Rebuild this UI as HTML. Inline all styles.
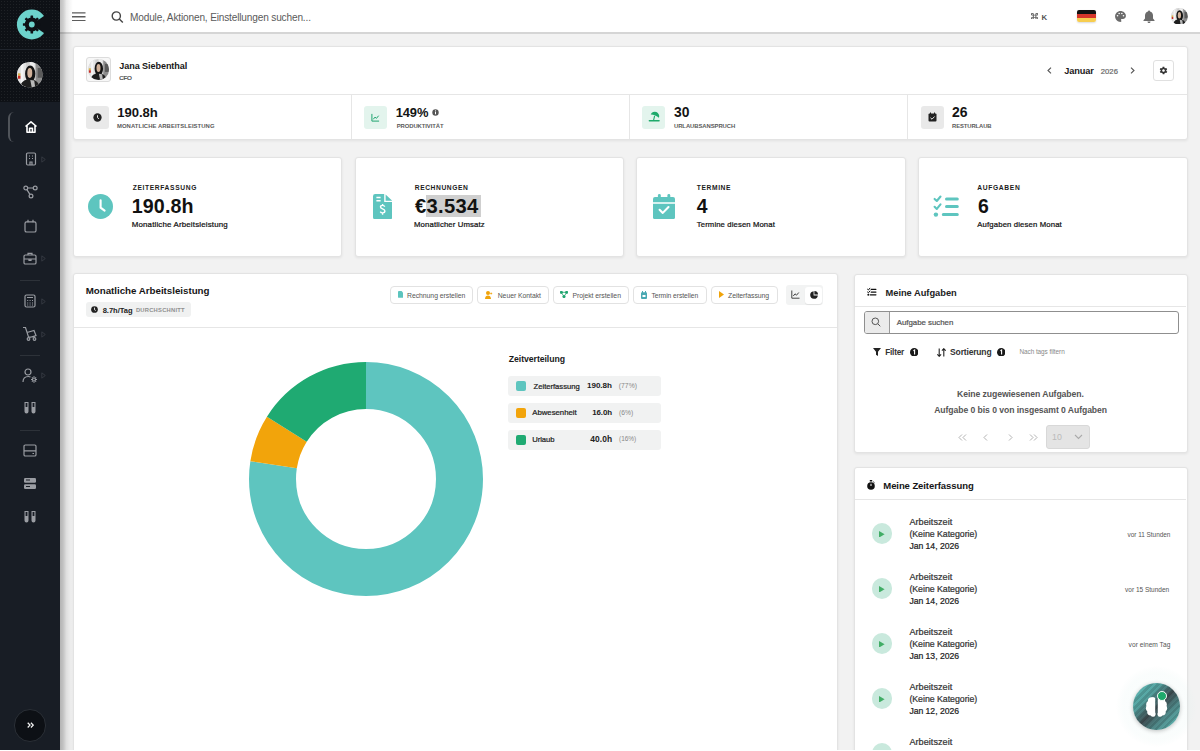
<!DOCTYPE html>
<html><head><meta charset="utf-8">
<style>
*{box-sizing:border-box;margin:0;padding:0}
html,body{width:1200px;height:751px;overflow:hidden;background:#f2f2f2;font-family:"Liberation Sans",sans-serif;color:#111}
.a{position:absolute}
.t{position:absolute;white-space:nowrap;line-height:1}
#side{left:0;top:0;width:60px;height:750px;background:#181d25}
#sidetop{left:0;top:0;width:60px;height:102px;background-color:#0e1116;background-image:radial-gradient(rgba(255,255,255,.07) 0.5px,transparent 0.7px);background-size:3px 3px}
#hdr{left:60px;top:0;width:1140px;height:34px;background:#fff;border-bottom:2px solid #d5d5d5}
#shadow{left:60px;top:0;width:13px;height:750px;background:linear-gradient(to right,rgba(0,0,0,.26) 0,rgba(0,0,0,.2) 3px,rgba(0,0,0,.08) 6.5px,rgba(0,0,0,.03) 10px,rgba(0,0,0,0) 13px);z-index:5}
.card{position:absolute;background:#fff;border:1px solid #e3e3e3;border-radius:3px;box-shadow:0 1px 3px rgba(0,0,0,.07)}
.sep{position:absolute;background:#e6e6e6}
.ib{position:absolute;width:23px;height:23px;border-radius:3px;background:#e9e9e9}
.ibg{background:#e3f4ed}
.sv{font-weight:bold;font-size:13.5px;color:#151515}
.sl{font-weight:bold;font-size:6px;letter-spacing:.45px;color:#555}
.kl{font-weight:bold;font-size:7px;letter-spacing:1.25px;color:#1b1b1b}
.kv{font-weight:bold;font-size:19.5px;color:#111}
.ks{font-size:8px;color:#222}
.btn{position:absolute;top:286px;height:18px;border:1px solid #e2e2e2;border-radius:4px;background:#fff}
.bt{position:absolute;top:5px;font-size:7.3px;color:#555;white-space:nowrap;line-height:1}
.lg{position:absolute;left:508px;width:153px;height:20px;background:#f1f2f2;border-radius:3px}
.sw{position:absolute;left:8px;top:5px;width:10px;height:10px;border-radius:2px}
.ln{position:absolute;left:25px;top:6px;font-size:7.8px;color:#333;line-height:1;white-space:nowrap}
.lv{position:absolute;right:48px;top:5.5px;font-size:8.5px;font-weight:bold;color:#222;line-height:1;white-space:nowrap}
.lp{position:absolute;left:111px;top:6px;font-size:6.5px;color:#777;line-height:1;white-space:nowrap}
.si{position:absolute;left:22px}
.zr{position:absolute;left:855px;width:332px;height:55px}
.play{position:absolute;left:16px;top:12px;width:21px;height:21px;border-radius:50%;background:#c9ebdf}
.zt{position:absolute;left:54px;font-size:8.8px;color:#444;line-height:1;white-space:nowrap}
.zd{position:absolute;right:16px;top:18.5px;font-size:6.3px;color:#555;line-height:1;white-space:nowrap}
</style></head><body>

<!-- sidebar -->
<div id="side" class="a"></div>
<div id="sidetop" class="a"></div>
<div class="a" style="left:0;top:49px;width:60px;height:1px;background:#20252d"></div>

<!-- logo -->
<svg class="a" style="left:14px;top:8px" width="36" height="34" viewBox="0 0 36 34">
  <circle cx="17.8" cy="16.5" r="14.9" fill="#6dd3cc"/>
  <path d="M17.8 16.5L36 3.8V29.2Z" fill="#0e1116"/>
  <g transform="translate(17.8,16.5)" fill="#0e1116">
    <circle r="7"/>
    <rect x="-1.3" y="-8.9" width="2.6" height="17.8" rx=".5"/>
    <rect x="-1.3" y="-8.9" width="2.6" height="17.8" rx=".5" transform="rotate(45)"/>
    <rect x="-1.3" y="-8.9" width="2.6" height="17.8" rx=".5" transform="rotate(90)"/>
    <rect x="-1.3" y="-8.9" width="2.6" height="17.8" rx=".5" transform="rotate(135)"/>
    <circle r="2.9" fill="#6dd3cc"/>
  </g>
</svg>

<!-- sidebar avatar -->
<svg width="0" height="0" style="position:absolute"><defs><clipPath id="pc"><circle cx="13" cy="13" r="13"/></clipPath></defs></svg>
<svg class="a" style="left:17.2px;top:62.2px" width="25.6" height="25.6" viewBox="0 0 26 26"><g clip-path="url(#pc)">
 <rect width="26" height="26" fill="#cfcfcf"/>
 <rect x="0" y="0" width="9" height="26" fill="#e2e2e2"/>
 <rect x="4" y="0" width="2.5" height="26" fill="#f4f4f4"/>
 <rect x="13" y="0" width="5" height="10" fill="#ededed"/>
 <rect x="19" y="0" width="7" height="26" fill="#8c8c8c"/>
 <rect x="21" y="6" width="5" height="10" fill="#5a5a5a"/>
 <rect x="1" y="11.5" width="2.5" height="2.5" fill="#d9b24a"/>
 <rect x="1" y="14" width="2.5" height="3" fill="#c92a22"/>
 <ellipse cx="13.4" cy="12" rx="5.2" ry="8.5" fill="#141414"/>
 <ellipse cx="13" cy="11.2" rx="2.5" ry="5" fill="#d2b29a"/>
 <path d="M3 26C4 20 8 17.5 13 17.5S22 20 23 26Z" fill="#1e1e1e"/>
 <path d="M13.5 18.3L17.5 18.8L18.5 26H15Z" fill="#b9b9b9"/>
</g></svg>

<!-- active indicator -->
<div class="a" style="left:8px;top:112px;width:6px;height:30px;border-left:2.3px solid #50545a;border-radius:6px 0 0 6px"></div>

<!-- sidebar icons -->
<svg class="a" style="left:24px;top:120px" width="14" height="14" viewBox="0 0 14 14" fill="none" stroke="#fff" stroke-width="1.6" stroke-linejoin="round"><path d="M1.5 6.5 L7 1.8 L12.5 6.5 M3 5.5 V12.3 H11 V5.5 M5.6 12.3 V8.3 H8.4 V12.3"/></svg>

<svg class="a" style="left:24px;top:152px" width="14" height="14" viewBox="0 0 14 14" fill="none" stroke="#9a9da3" stroke-width="1.2"><rect x="2.5" y="1" width="9" height="12" rx="1.2"/><path d="M5 4h1M8 4h1M5 6.5h1M8 6.5h1M6 13v-3h2v3"/></svg>
<svg class="a" style="left:41px;top:156px" width="5" height="7" viewBox="0 0 5 7" fill="none" stroke="#3b4047" stroke-width=".8"><path d="M0.8 0.8 L4.3 3.5 L0.8 6.2Z"/></svg>

<svg class="a" style="left:23px;top:185px" width="15" height="14" viewBox="0 0 15 14" fill="none" stroke="#9a9da3" stroke-width="1.2"><circle cx="2.8" cy="3" r="1.9"/><circle cx="12.2" cy="3" r="1.9"/><circle cx="8" cy="11" r="1.9"/><path d="M4.7 3H10.3M3.9 4.6L6.9 9.4"/></svg>

<svg class="a" style="left:24px;top:219px" width="13" height="14" viewBox="0 0 13 14" fill="none" stroke="#9a9da3" stroke-width="1.2"><rect x="1" y="2.8" width="11" height="10.2" rx="1.6"/><path d="M4 0.8V3.2M9 0.8V3.2"/></svg>

<svg class="a" style="left:23px;top:252px" width="14" height="13" viewBox="0 0 14 13" fill="none" stroke="#9a9da3" stroke-width="1.2"><rect x="1" y="3" width="12" height="9" rx="1.3"/><path d="M5 3V1.3H9V3M1 7H13M6 7v1.3h2V7"/></svg>
<svg class="a" style="left:41px;top:255px" width="5" height="7" viewBox="0 0 5 7" fill="none" stroke="#3b4047" stroke-width=".8"><path d="M0.8 0.8 L4.3 3.5 L0.8 6.2Z"/></svg>

<div class="a" style="left:20px;top:280px;width:20px;height:1px;background:#2d3239"></div>

<svg class="a" style="left:24px;top:294px" width="12" height="14" viewBox="0 0 12 14" fill="none" stroke="#9a9da3" stroke-width="1.2"><rect x="1" y="1" width="10" height="12" rx="1.5"/><path d="M3 3.5H9M3.2 6.5h1M5.6 6.5h1M8 6.5h1M3.2 9h1M5.6 9h1M8 9h1M3.2 11h1M5.6 11h1M8 11h1"/></svg>
<svg class="a" style="left:41px;top:298px" width="5" height="7" viewBox="0 0 5 7" fill="none" stroke="#3b4047" stroke-width=".8"><path d="M0.8 0.8 L4.3 3.5 L0.8 6.2Z"/></svg>

<svg class="a" style="left:22px;top:326px" width="16" height="15" viewBox="0 0 16 15" fill="none" stroke="#9a9da3" stroke-width="1.2"><path d="M1 1.5H3.5L6.5 11H13M5 6.5L12 4.5L14 9.5L7.5 11.5"/><circle cx="6.5" cy="13" r="1.3"/><circle cx="12.5" cy="13" r="1.3"/></svg>
<svg class="a" style="left:41px;top:331px" width="5" height="7" viewBox="0 0 5 7" fill="none" stroke="#3b4047" stroke-width=".8"><path d="M0.8 0.8 L4.3 3.5 L0.8 6.2Z"/></svg>

<div class="a" style="left:20px;top:355px;width:20px;height:1px;background:#2d3239"></div>

<svg class="a" style="left:22px;top:368px" width="16" height="15" viewBox="0 0 16 15" fill="none" stroke="#9a9da3" stroke-width="1.2"><circle cx="6" cy="4" r="3"/><path d="M1 14C1 10.5 3.2 8.5 6.5 8.5C7.3 8.5 8 8.6 8.5 8.9"/><circle cx="12" cy="11.5" r="1.5"/><path d="M12 8.3V9.5M12 13.5V14.7M9 11.5H10M14 11.5H15M9.9 9.4l.7.7M13.4 12.9l.7.7M9.9 13.6l.7-.7M13.4 10.1l.7-.7"/></svg>
<svg class="a" style="left:41px;top:372px" width="5" height="7" viewBox="0 0 5 7" fill="none" stroke="#3b4047" stroke-width=".8"><path d="M0.8 0.8 L4.3 3.5 L0.8 6.2Z"/></svg>

<svg class="a" style="left:23px;top:401px" width="14" height="14" viewBox="0 0 14 14" fill="#9a9da3"><path d="M1.5 1H5.5V10.5A2 2 0 0 1 1.5 10.5Z M8.5 1H12.5V10.5A2 2 0 0 1 8.5 10.5Z"/><path d="M2.6 2V6H4.4V2ZM9.6 2V6H11.4V2Z" fill="#181d25"/></svg>

<div class="a" style="left:20px;top:430px;width:20px;height:1px;background:#2d3239"></div>

<svg class="a" style="left:23px;top:444px" width="14" height="13" viewBox="0 0 14 13" fill="none" stroke="#9a9da3" stroke-width="1.2"><rect x="1" y="1" width="12" height="11" rx="1.3"/><path d="M1 6.8H13M9.5 9.5h1.5"/></svg>

<svg class="a" style="left:23px;top:477px" width="14" height="13" viewBox="0 0 14 13" fill="#9a9da3"><rect x="1" y="1" width="12" height="4.8" rx="1.2"/><rect x="1" y="7.2" width="12" height="4.8" rx="1.2"/><path d="M3 3h4M3 9.5h4" stroke="#181d25" stroke-width="1.2"/></svg>

<svg class="a" style="left:23px;top:510px" width="14" height="14" viewBox="0 0 14 14" fill="#9a9da3"><path d="M1.5 1H5.5V10.5A2 2 0 0 1 1.5 10.5Z M8.5 1H12.5V10.5A2 2 0 0 1 8.5 10.5Z"/><path d="M2.6 2V6H4.4V2ZM9.6 2V6H11.4V2Z" fill="#181d25"/></svg>

<!-- expand button -->
<div class="a" style="left:13.8px;top:709px;width:32.5px;height:32.5px;border-radius:50%;background:#0d1015;border:1.3px solid #2a2f36"></div>
<svg class="a" style="left:26.6px;top:722.3px" width="7" height="6.2" viewBox="0 0 7 6.2" fill="none" stroke="#f2f2f2" stroke-width="1.25"><path d="M.7 .7L3 3.1L.7 5.5M3.9 .7L6.2 3.1L3.9 5.5"/></svg>

<div class="a" style="left:0;top:750px;width:1200px;height:1px;background:#fff;z-index:6"></div>
<!-- header -->
<div id="hdr" class="a"></div>
<div id="shadow" class="a"></div>
<svg class="a" style="left:72px;top:11.5px" width="13.5" height="9.5" viewBox="0 0 13.5 9.5" stroke="#5c5c5c" stroke-width="1.3"><path d="M0 .8H13.5M0 4.75H13.5M0 8.7H13.5"/></svg>
<svg class="a" style="left:110.5px;top:10.8px" width="13" height="12" viewBox="0 0 13 12" fill="none" stroke="#454545" stroke-width="1.4"><circle cx="5.3" cy="5" r="4.1"/><path d="M8.3 8L11.8 11.4"/></svg>
<svg class="a" style="left:1031px;top:12.7px" width="7.2" height="6.5" viewBox="0 0 8 8" preserveAspectRatio="none" fill="none" stroke="#666" stroke-width="1.15"><path d="M2.6 2.6H5.4V5.4H2.6ZM2.6 2.6V1.6A1.1 1.1 0 1 0 1.6 2.6H2.6M5.4 2.6V1.6A1.1 1.1 0 1 1 6.4 2.6H5.4M5.4 5.4H6.4A1.1 1.1 0 1 1 5.4 6.4V5.4M2.6 5.4V6.4A1.1 1.1 0 1 1 1.6 5.4H2.6"/></svg>
<div class="a" style="left:1077px;top:10px;width:19px;height:12px;border-radius:2px;overflow:hidden;box-shadow:0 1px 2px rgba(0,0,0,.15)">
 <div style="height:4px;background:#111"></div><div style="height:4px;background:#d5362b"></div><div style="height:4px;background:#f7cd4f"></div>
</div>
<svg class="a" style="left:1114px;top:10px" width="13" height="13" viewBox="0 0 24 24" fill="#6b6b6b"><path d="M12 2C6.5 2 2 6.5 2 12s4.5 10 10 10c.9 0 1.7-.8 1.7-1.7 0-.4-.2-.8-.4-1.1-.3-.3-.4-.7-.4-1.1 0-.9.8-1.7 1.7-1.7H16.5c3 0 5.5-2.5 5.5-5.5C22 6 17.5 2 12 2zM6.5 12a1.5 1.5 0 1 1 0-3 1.5 1.5 0 0 1 0 3zm3-4a1.5 1.5 0 1 1 0-3 1.5 1.5 0 0 1 0 3zm5 0a1.5 1.5 0 1 1 0-3 1.5 1.5 0 0 1 0 3zm3 4a1.5 1.5 0 1 1 0-3 1.5 1.5 0 0 1 0 3z"/></svg>
<svg class="a" style="left:1143px;top:10px" width="12" height="13" viewBox="0 0 12 13" fill="#6b6b6b"><path d="M6 0.5C6.6 0.5 7 .9 7 1.4 9 1.9 10 3.6 10 5.5V8.5L11.5 10.3V11H0.5V10.3L2 8.5V5.5C2 3.6 3 1.9 5 1.4 5 .9 5.4.5 6 .5zM4.5 11.6H7.5A1.5 1.5 0 0 1 4.5 11.6Z"/></svg>
<svg class="a" style="left:1171px;top:7.7px" width="16.8" height="16.8" viewBox="0 0 26 26"><g clip-path="url(#pc)">
 <rect width="26" height="26" fill="#cfcfcf"/>
 <rect x="0" y="0" width="9" height="26" fill="#e2e2e2"/>
 <rect x="4" y="0" width="2.5" height="26" fill="#f4f4f4"/>
 <rect x="13" y="0" width="5" height="10" fill="#ededed"/>
 <rect x="19" y="0" width="7" height="26" fill="#8c8c8c"/>
 <rect x="21" y="6" width="5" height="10" fill="#5a5a5a"/>
 <rect x="1" y="11.5" width="2.5" height="2.5" fill="#d9b24a"/>
 <rect x="1" y="14" width="2.5" height="3" fill="#c92a22"/>
 <ellipse cx="13.4" cy="12" rx="5.2" ry="8.5" fill="#141414"/>
 <ellipse cx="13" cy="11.2" rx="2.5" ry="5" fill="#d2b29a"/>
 <path d="M3 26C4 20 8 17.5 13 17.5S22 20 23 26Z" fill="#1e1e1e"/>
 <path d="M13.5 18.3L17.5 18.8L18.5 26H15Z" fill="#b9b9b9"/>
</g></svg>

<!-- profile card -->
<div class="card" style="left:73px;top:46px;width:1115px;height:94px"></div>
<div class="sep" style="left:74px;top:94px;width:1113px;height:1px"></div>
<div class="sep" style="left:351px;top:95px;width:1px;height:44px"></div>
<div class="sep" style="left:629px;top:95px;width:1px;height:44px"></div>
<div class="sep" style="left:907px;top:95px;width:1px;height:44px"></div>
<div class="a" style="left:86px;top:57px;width:25px;height:25px;border:1px solid #dcdcdc;border-radius:3px;background:#f7f7f7"></div>
<svg class="a" style="left:88px;top:59px" width="21" height="21" viewBox="0 0 26 26"><g clip-path="url(#pc)">
 <rect width="26" height="26" fill="#cfcfcf"/>
 <rect x="0" y="0" width="9" height="26" fill="#e2e2e2"/>
 <rect x="4" y="0" width="2.5" height="26" fill="#f4f4f4"/>
 <rect x="13" y="0" width="5" height="10" fill="#ededed"/>
 <rect x="19" y="0" width="7" height="26" fill="#8c8c8c"/>
 <rect x="21" y="6" width="5" height="10" fill="#5a5a5a"/>
 <rect x="1" y="11.5" width="2.5" height="2.5" fill="#d9b24a"/>
 <rect x="1" y="14" width="2.5" height="3" fill="#c92a22"/>
 <ellipse cx="13.4" cy="12" rx="5.2" ry="8.5" fill="#141414"/>
 <ellipse cx="13" cy="11.2" rx="2.5" ry="5" fill="#d2b29a"/>
 <path d="M3 26C4 20 8 17.5 13 17.5S22 20 23 26Z" fill="#1e1e1e"/>
 <path d="M13.5 18.3L17.5 18.8L18.5 26H15Z" fill="#b9b9b9"/>
</g></svg>

<svg class="a" style="left:1046.8px;top:67.3px" width="5" height="7" viewBox="0 0 5 7" fill="none" stroke="#555" stroke-width="1.1"><path d="M4 .7L1 3.5L4 6.3"/></svg>
<svg class="a" style="left:1130.3px;top:67.3px" width="5" height="7" viewBox="0 0 5 7" fill="none" stroke="#555" stroke-width="1.1"><path d="M1 .7L4 3.5L1 6.3"/></svg>
<div class="a" style="left:1153px;top:60px;width:21px;height:21px;border:1px solid #e0e0e0;border-radius:3px;background:#fff"></div>
<svg class="a" style="left:1159px;top:66px" width="9" height="9" viewBox="0 0 24 24" fill="#333"><path d="M19.4 13c.1-.3.1-.7.1-1s0-.7-.1-1l2.1-1.6c.2-.2.2-.4.1-.6l-2-3.5c-.1-.2-.4-.3-.6-.2l-2.5 1c-.5-.4-1.1-.7-1.7-1l-.4-2.6c0-.3-.2-.4-.5-.4h-4c-.3 0-.5.2-.5.4l-.4 2.7c-.6.2-1.1.6-1.7 1l-2.5-1c-.2-.1-.5 0-.6.2l-2 3.5c-.1.2 0 .5.1.6L4.6 11c0 .3-.1.7-.1 1s0 .7.1 1l-2.1 1.6c-.2.2-.2.4-.1.6l2 3.5c.1.2.4.3.6.2l2.5-1c.5.4 1.1.7 1.7 1l.4 2.7c0 .2.2.4.5.4h4c.3 0 .5-.2.5-.4l.4-2.7c.6-.2 1.2-.6 1.7-1l2.5 1c.2.1.5 0 .6-.2l2-3.5c.1-.2.1-.5-.1-.6L19.4 13zM12 15.5c-1.9 0-3.5-1.6-3.5-3.5s1.6-3.5 3.5-3.5 3.5 1.6 3.5 3.5-1.6 3.5-3.5 3.5z"/></svg>

<!-- stat cells -->
<div class="ib" style="left:86px;top:106px"></div>
<svg class="a" style="left:93px;top:113px" width="9" height="9" viewBox="0 0 10 10"><circle cx="5" cy="5" r="4.6" fill="#222"/><path d="M5 2.5V5.2L6.6 6.4" stroke="#e9e9e9" stroke-width="1.1" fill="none"/></svg>

<div class="ib ibg" style="left:364px;top:106px"></div>
<svg class="a" style="left:371px;top:113px" width="9" height="9" viewBox="0 0 10 10" fill="none" stroke="#1fa46f" stroke-width="1.1"><path d="M1 1V9H9M2.5 7L4.5 4.5L6 6L8.5 3"/></svg>
<svg class="a" style="left:432px;top:109px" width="7" height="7" viewBox="0 0 7 7"><circle cx="3.5" cy="3.5" r="3.2" fill="#555"/><path d="M3.5 3v2.3" stroke="#fff" stroke-width="1"/><circle cx="3.5" cy="1.9" r=".55" fill="#fff"/></svg>

<div class="ib ibg" style="left:642px;top:106px"></div>
<svg class="a" style="left:648px;top:111px" width="12" height="12" viewBox="0 0 12 12"><g transform="rotate(22 7 4.6)"><path d="M2.6 5.2A4.4 4.4 0 0 1 11.4 5.2Q9.5 4.3 7 4.6 4.5 4.3 2.6 5.2Z" fill="#1eaa6b"/></g><path d="M6.6 5L5.6 9.2" stroke="#1eaa6b" stroke-width="1.1"/><path d="M1.4 9.8H11" stroke="#1eaa6b" stroke-width="1.6" stroke-linecap="round"/></svg>

<div class="ib" style="left:921px;top:106px"></div>
<svg class="a" style="left:928px;top:112px" width="9" height="10" viewBox="0 0 9 10"><rect x=".5" y="1.5" width="8" height="8" rx="1" fill="#222"/><path d="M2.5 0.5V2.5M6.5 .5V2.5" stroke="#222" stroke-width="1"/><path d="M2.5 5.8L4 7.2L6.6 4.5" stroke="#e9e9e9" stroke-width="1" fill="none"/></svg>

<!-- KPI cards -->
<div class="card" style="left:73px;top:157px;width:269px;height:100px"></div>
<div class="card" style="left:355px;top:157px;width:269px;height:100px"></div>
<div class="card" style="left:636px;top:157px;width:270px;height:100px"></div>
<div class="card" style="left:918px;top:157px;width:270px;height:100px"></div>

<svg class="a" style="left:88px;top:194px" width="25" height="25" viewBox="0 0 25 25"><circle cx="12.5" cy="12.5" r="12.5" fill="#5ec5bf"/><path d="M12.6 6.3V13.6L16.6 16.6" stroke="#fff" stroke-width="2.1" stroke-linecap="round" fill="none"/></svg>

<svg class="a" style="left:372.8px;top:193.8px" width="19.4" height="25.4" viewBox="0 0 19.4 25.4"><path d="M0 2.2A2.2 2.2 0 0 1 2.2 0H11.2V7.9H19.2V23.2A2.2 2.2 0 0 1 17 25.4H2.2A2.2 2.2 0 0 1 0 23.2Z" fill="#5ec5bf"/><path d="M12.6 0.4L19.2 6.7H12.6Z" fill="#5ec5bf"/><path d="M3.4 3.4H7.6M3.4 6.7H7.6" stroke="#fff" stroke-width="1.5"/><path d="M11.8 12.6C11.3 11.8 10.5 11.4 9.6 11.4 8.4 11.4 7.5 12.1 7.5 13.1 7.5 15.3 11.9 14.6 11.9 17.1 11.9 18.2 10.9 18.9 9.6 18.9 8.6 18.9 7.7 18.4 7.3 17.6M9.6 10V11.4M9.6 18.9V20.8" stroke="#fff" stroke-width="1.4" fill="none"/></svg>
<div class="a" style="left:426px;top:195px;width:55px;height:22px;background:#cfcfcf"></div>

<svg class="a" style="left:653.3px;top:194px" width="22" height="25.2" viewBox="0 0 22 25.2"><path d="M0 5A2 2 0 0 1 2 3H20A2 2 0 0 1 22 5V8.2H0Z" fill="#5ec5bf"/><path d="M0 9.7H22V23.2A2 2 0 0 1 20 25.2H2A2 2 0 0 1 0 23.2Z" fill="#5ec5bf"/><rect x="4.9" y="0" width="2.9" height="5.5" rx="1.4" fill="#5ec5bf"/><rect x="14.4" y="0" width="2.9" height="5.5" rx="1.4" fill="#5ec5bf"/><path d="M6.6 15.8L9.8 18.9L15.5 13" stroke="#fff" stroke-width="2.1" fill="none" stroke-linecap="round" stroke-linejoin="round"/></svg>

<svg class="a" style="left:925px;top:185px" width="40" height="40" viewBox="0 0 40 40" fill="none" stroke="#5ec5bf" stroke-linecap="round" stroke-linejoin="round"><path d="M9.6 13.9L11.8 16L15.5 11.5M9.6 21.8L11.8 23.9L15.5 19.4" stroke-width="2.1"/><circle cx="10.9" cy="29.6" r="2.2" fill="#5ec5bf" stroke="none"/><path d="M21.5 14H32.3M21.5 21.6H32.3M18.3 29.4H32.3" stroke-width="3"/></svg>

<!-- chart card -->
<div class="card" style="left:73px;top:273px;width:765px;height:500px"></div>
<div class="sep" style="left:74px;top:327px;width:763px;height:1px"></div>
<div class="a" style="left:86px;top:302px;width:105px;height:15px;background:#f0f1f1;border-radius:3px"></div>
<svg class="a" style="left:91px;top:306px" width="7" height="7" viewBox="0 0 10 10"><circle cx="5" cy="5" r="4.8" fill="#222"/><path d="M5 2.3V5.3L6.8 6.5" stroke="#f0f1f1" stroke-width="1.3" fill="none"/></svg>

<div class="btn" style="left:390px;width:83px"></div>
<svg class="a" style="left:397.7px;top:291.2px" width="5.3" height="6.8" viewBox="0 0 6 8" preserveAspectRatio="none"><path d="M0 1A1 1 0 0 1 1 0H4L6 2V7A1 1 0 0 1 5 8H1A1 1 0 0 1 0 7Z" fill="#5cc4be"/></svg>

<div class="btn" style="left:477px;width:72px"></div>
<svg class="a" style="left:485px;top:291px" width="8" height="8" viewBox="0 0 8 8" fill="#f0a30a"><circle cx="3" cy="2" r="2"/><path d="M0 8C0 5.5 1.5 4.5 3 4.5S6 5.5 6 8Z"/><path d="M6.2 1.5V3.5M5.2 2.5H7.2" stroke="#f0a30a" stroke-width=".8"/></svg>

<div class="btn" style="left:553px;width:76px"></div>
<svg class="a" style="left:560px;top:291px" width="8" height="7" viewBox="0 0 8 7" fill="#1fa46f" stroke="#1fa46f" stroke-width=".8"><circle cx="1.3" cy="1.3" r="1.2"/><circle cx="6.7" cy="1.3" r="1.2"/><circle cx="4" cy="5.7" r="1.2"/><path d="M1.3 1.3H6.7M1.3 1.3L4 5.7M6.7 1.3L4 5.7" fill="none"/></svg>

<div class="btn" style="left:633px;width:74px"></div>
<svg class="a" style="left:641px;top:290.5px" width="6" height="8" viewBox="0 0 6 8"><rect x="0" y="1.3" width="6" height="6.7" rx="1" fill="#4aa9b3"/><path d="M1.5 0V2M4.5 0V2" stroke="#4aa9b3" stroke-width="1"/><rect x="1.5" y="4" width="3" height="2" fill="#fff"/></svg>

<div class="btn" style="left:711px;width:67px"></div>
<svg class="a" style="left:719px;top:291px" width="5" height="7" viewBox="0 0 5 7" fill="#f0a30a"><path d="M0 0L5 3.5L0 7Z"/></svg>

<div class="a" style="left:786px;top:285px;width:37px;height:20px;background:#f2f3f3;border-radius:3px"></div>
<div class="a" style="left:805px;top:286.5px;width:17px;height:17px;background:#fff;border-radius:3px;box-shadow:0 1px 1px rgba(0,0,0,.08)"></div>
<svg class="a" style="left:791px;top:290px" width="9" height="9" viewBox="0 0 9 9" fill="none" stroke="#444" stroke-width="1"><path d="M.8 .5V8.2H8.5M2.3 6L4 3.8L5.5 5.2L7.8 2.5"/></svg>
<svg class="a" style="left:810px;top:290.5px" width="8" height="8" viewBox="0 0 10 10" fill="#222"><path d="M4.5 0.2A4.8 4.8 0 1 0 9.8 5.5H4.5Z"/><path d="M5.5 0A4.5 4.5 0 0 1 10 4.5H5.5Z"/></svg>

<!-- donut -->
<svg class="a" style="left:248px;top:361px" width="236" height="236" viewBox="-118 -118 236 236">
  <g transform="rotate(-90)">
   <circle r="93.5" fill="none" stroke="#5ec5bf" stroke-width="47" stroke-dasharray="454.2 1000"/>
   <circle r="93.5" fill="none" stroke="#f2a40b" stroke-width="47" stroke-dasharray="0 454.2 38.1 1000"/>
   <circle r="93.5" fill="none" stroke="#1faa72" stroke-width="47" stroke-dasharray="0 492.3 95.3 1000"/>
  </g>
</svg>

<div class="lg" style="top:376px"></div><div class="a" style="left:516px;top:381px;width:10px;height:10px;border-radius:2px;background:#5ec5bf"></div>
<div class="lg" style="top:403px"></div><div class="a" style="left:516px;top:408px;width:10px;height:10px;border-radius:2px;background:#f2a40b"></div>
<div class="lg" style="top:429.5px"></div><div class="a" style="left:516px;top:434.5px;width:10px;height:10px;border-radius:2px;background:#1faa72"></div>

<!-- aufgaben card -->
<div class="card" style="left:854px;top:274px;width:334px;height:179px"></div>
<div class="sep" style="left:855px;top:306px;width:331px;height:1px"></div>
<svg class="a" style="left:866px;top:287px" width="11" height="10" viewBox="0 0 11 10" fill="none" stroke="#111" stroke-linecap="round" stroke-linejoin="round"><path d="M5.2 2.3H9.9M5.2 5.1H9.9M4.3 7.8H9.9" stroke-width="1.3"/><path d="M1.5 2.2L2.4 3L3.9 1.2M1.5 5L2.4 5.8L3.9 4" stroke-width="1"/><circle cx="2.3" cy="7.8" r=".95" fill="#111" stroke="none"/></svg>

<div class="a" style="left:863.5px;top:311px;width:315px;height:23px;border:1px solid #8f8f8f;border-radius:3px;background:#fff;overflow:hidden">
  <div class="a" style="left:0;top:0;width:25px;height:21px;background:#ebebeb;border-right:1px solid #9a9a9a"></div>
</div>
<svg class="a" style="left:871px;top:317px" width="10" height="10" viewBox="0 0 10 10" fill="none" stroke="#555" stroke-width="1"><circle cx="4.3" cy="4.3" r="3.3"/><path d="M6.8 6.8L9.3 9.3"/></svg>

<svg class="a" style="left:872.5px;top:348px" width="8" height="8" viewBox="0 0 8 8" fill="#222"><path d="M0 0H8L5 3.8V8L3 6.8V3.8Z"/></svg>
<svg class="a" style="left:909.5px;top:347.5px" width="8.5" height="8.5" viewBox="0 0 10 10"><circle cx="5" cy="5" r="5" fill="#1a1a1a"/><path d="M4 3.2L5.4 2.4V7.6" stroke="#fff" stroke-width="1.3" fill="none"/></svg>
<svg class="a" style="left:936.5px;top:347.5px" width="9" height="9" viewBox="0 0 9 9" fill="none" stroke="#222" stroke-width="1.1"><path d="M2.2 0.5V8.3M.3 6.3L2.2 8.3L4.1 6.3M6.8 8.5V.7M4.9 2.7L6.8 .7L8.7 2.7"/></svg>
<svg class="a" style="left:996.5px;top:347.5px" width="8.5" height="8.5" viewBox="0 0 10 10"><circle cx="5" cy="5" r="5" fill="#1a1a1a"/><path d="M4 3.2L5.4 2.4V7.6" stroke="#fff" stroke-width="1.3" fill="none"/></svg>

<svg class="a" style="left:958px;top:434px" width="9" height="7" viewBox="0 0 9 7" fill="none" stroke="#aaa" stroke-width=".9"><path d="M4 .5L1 3.5L4 6.5M8 .5L5 3.5L8 6.5"/></svg>
<svg class="a" style="left:983px;top:434px" width="5" height="7" viewBox="0 0 5 7" fill="none" stroke="#aaa" stroke-width=".9"><path d="M4 .5L1 3.5L4 6.5"/></svg>
<svg class="a" style="left:1008px;top:434px" width="5" height="7" viewBox="0 0 5 7" fill="none" stroke="#aaa" stroke-width=".9"><path d="M1 .5L4 3.5L1 6.5"/></svg>
<svg class="a" style="left:1029px;top:434px" width="9" height="7" viewBox="0 0 9 7" fill="none" stroke="#aaa" stroke-width=".9"><path d="M1 .5L4 3.5L1 6.5M5 .5L8 3.5L5 6.5"/></svg>
<div class="a" style="left:1046px;top:425px;width:44px;height:24px;background:#e4e4e4;border:1px solid #d8d8d8;border-radius:3px"></div>
<svg class="a" style="left:1074px;top:434px" width="9" height="6" viewBox="0 0 9 6" fill="none" stroke="#aaa" stroke-width="1.1"><path d="M1 1L4.5 4.5L8 1"/></svg>

<!-- zeiterfassung card -->
<div class="card" style="left:854px;top:467px;width:334px;height:300px"></div>
<div class="sep" style="left:855px;top:499px;width:331px;height:1px"></div>
<svg class="a" style="left:867px;top:480px" width="8" height="10" viewBox="0 0 8 10" fill="#111"><circle cx="4" cy="6" r="3.8"/><rect x="2.8" y="0" width="2.4" height="1.5"/><path d="M6.3 1.8L7.5 2.8" stroke="#111" stroke-width="1"/><path d="M4 6V3.8" stroke="#fff" stroke-width="1"/></svg>

<div class="a" style="left:871.8px;top:523.3px;width:20.6px;height:20.6px;border-radius:50%;background:#c9e9dd"></div><svg class="a" style="left:879.2px;top:530.5px" width="5.6" height="6.6" viewBox="0 0 5.6 6.6" fill="#41ad66"><path d="M0 0L5.6 3.3L0 6.6Z"/></svg>
<div class="a" style="left:871.8px;top:578.3px;width:20.6px;height:20.6px;border-radius:50%;background:#c9e9dd"></div><svg class="a" style="left:879.2px;top:585.5px" width="5.6" height="6.6" viewBox="0 0 5.6 6.6" fill="#41ad66"><path d="M0 0L5.6 3.3L0 6.6Z"/></svg>
<div class="a" style="left:871.8px;top:633.3px;width:20.6px;height:20.6px;border-radius:50%;background:#c9e9dd"></div><svg class="a" style="left:879.2px;top:640.5px" width="5.6" height="6.6" viewBox="0 0 5.6 6.6" fill="#41ad66"><path d="M0 0L5.6 3.3L0 6.6Z"/></svg>
<div class="a" style="left:871.8px;top:688.3px;width:20.6px;height:20.6px;border-radius:50%;background:#c9e9dd"></div><svg class="a" style="left:879.2px;top:695.5px" width="5.6" height="6.6" viewBox="0 0 5.6 6.6" fill="#41ad66"><path d="M0 0L5.6 3.3L0 6.6Z"/></svg>
<div class="a" style="left:871.8px;top:743.3px;width:20.6px;height:20.6px;border-radius:50%;background:#c9e9dd"></div><svg class="a" style="left:879.2px;top:750.5px" width="5.6" height="6.6" viewBox="0 0 5.6 6.6" fill="#41ad66"><path d="M0 0L5.6 3.3L0 6.6Z"/></svg>

<!-- FAB -->
<div class="a" style="left:1116px;top:666px;width:81px;height:81px;border-radius:50%;background:radial-gradient(circle,rgba(215,238,235,.13) 0,rgba(215,238,235,.13) 58%,rgba(225,240,238,.08) 66%,rgba(255,255,255,0) 71%)"></div>
<div class="a" style="left:1133px;top:683px;width:47px;height:47px;border-radius:50%;background:repeating-linear-gradient(135deg,rgba(0,0,0,0) 0 2.5px,rgba(0,0,0,.13) 2.5px 5px),linear-gradient(135deg,#63bdb9 0%,#55a3a1 30%,#3f4d52 52%,#4c7f80 66%,#5aa9a6 85%,#5fb5b1 100%);box-shadow:0 1px 4px rgba(0,0,0,.25)"></div>
<svg class="a" style="left:1145px;top:695px" width="23" height="23" viewBox="0 0 23 23" fill="#fff">
 <g><circle cx="6.5" cy="5.8" r="3.6"/><circle cx="4.6" cy="9.5" r="3.4"/><circle cx="4.2" cy="13.3" r="3.3"/><circle cx="5.6" cy="17" r="3.4"/><circle cx="8" cy="19" r="2.5"/><rect x="6" y="2.3" width="4.2" height="19.2" rx="1.5"/></g>
 <g><circle cx="16.5" cy="5.8" r="3.6"/><circle cx="18.4" cy="9.5" r="3.4"/><circle cx="18.8" cy="13.3" r="3.3"/><circle cx="17.4" cy="17" r="3.4"/><circle cx="15" cy="19" r="2.5"/><rect x="12.8" y="2.3" width="4.2" height="19.2" rx="1.5"/></g>
</svg>
<div class="a" style="left:1157.4px;top:691.1px;width:9.8px;height:9.8px;border-radius:50%;background:#1faa6c;border:1.3px solid #fff"></div>

<div class="t" id="srch" style="left:130.00px;top:12.51px;font-size:10.10px;letter-spacing:-0.162px;color:#5a5a5a">Module, Aktionen, Einstellungen suchen...</div>
<div class="t" id="kbdk" style="left:1041.50px;top:13.50px;font-size:7.80px;letter-spacing:0.000px;color:#555;font-weight:bold">K</div>
<div class="t" id="jana" style="left:119.30px;top:61.76px;font-size:9.06px;letter-spacing:-0.067px;color:#161616;font-weight:bold">Jana Siebenthal</div>
<div class="t" id="cfo" style="left:119.30px;top:74.90px;font-size:6.26px;letter-spacing:-0.271px;color:#444;-webkit-text-stroke:0.22px #444">CFO</div>
<div class="t" id="jan" style="left:1064.21px;top:66.86px;font-size:9.21px;letter-spacing:-0.104px;color:#1a1a1a;font-weight:bold">Januar</div>
<div class="t" id="yr" style="left:1100.80px;top:67.79px;font-size:7.64px;letter-spacing:0.040px;color:#6a6a6a;-webkit-text-stroke:0.22px #6a6a6a">2026</div>
<div class="t" id="s1v" style="left:117.25px;top:106.05px;font-size:13.07px;letter-spacing:-0.021px;color:#141414;font-weight:bold">190.8h</div>
<div class="t" id="s1l" style="left:117.00px;top:123.61px;font-size:5.90px;letter-spacing:0.064px;color:#5a5a5a;font-weight:bold">MONATLICHE ARBEITSLEISTUNG</div>
<div class="t" id="s2v" style="left:395.71px;top:107.00px;font-size:12.92px;letter-spacing:-0.095px;color:#141414;font-weight:bold">149%</div>
<div class="t" id="s2l" style="left:396.71px;top:123.61px;font-size:5.90px;letter-spacing:-0.077px;color:#5a5a5a;font-weight:bold">PRODUKTIVITÄT</div>
<div class="t" id="s3v" style="left:674.00px;top:106.01px;font-size:13.87px;letter-spacing:0.000px;color:#141414;font-weight:bold">30</div>
<div class="t" id="s3l" style="left:674.00px;top:123.61px;font-size:5.90px;letter-spacing:-0.071px;color:#5a5a5a;font-weight:bold">URLAUBSANSPRUCH</div>
<div class="t" id="s4v" style="left:952.00px;top:105.63px;font-size:13.96px;letter-spacing:0.000px;color:#141414;font-weight:bold">26</div>
<div class="t" id="s4l" style="left:952.00px;top:123.61px;font-size:5.90px;letter-spacing:-0.116px;color:#5a5a5a;font-weight:bold">RESTURLAUB</div>
<div class="t" id="k1l" style="left:132.71px;top:184.91px;font-size:6.70px;letter-spacing:0.631px;color:#1b1b1b;font-weight:bold">ZEITERFASSUNG</div>
<div class="t" id="k1v" style="left:131.71px;top:197.05px;font-size:19.67px;letter-spacing:0.129px;color:#111;font-weight:bold">190.8h</div>
<div class="t" id="k1s" style="left:131.71px;top:221.09px;font-size:7.92px;letter-spacing:0.164px;color:#111;-webkit-text-stroke:0.22px #111">Monatliche Arbeitsleistung</div>
<div class="t" id="k2l" style="left:414.75px;top:184.90px;font-size:6.70px;letter-spacing:0.577px;color:#1b1b1b;font-weight:bold">RECHNUNGEN</div>
<div class="t" id="k2v" style="left:415.00px;top:195.97px;font-size:20.21px;letter-spacing:0.318px;color:#111;font-weight:bold">€3.534</div>
<div class="t" id="k2s" style="left:414.00px;top:221.11px;font-size:7.74px;letter-spacing:0.135px;color:#111;-webkit-text-stroke:0.22px #111">Monatlicher Umsatz</div>
<div class="t" id="k3l" style="left:696.80px;top:184.91px;font-size:6.70px;letter-spacing:0.602px;color:#1b1b1b;font-weight:bold">TERMINE</div>
<div class="t" id="k3v" style="left:696.80px;top:196.88px;font-size:19.39px;letter-spacing:0.000px;color:#111;font-weight:bold">4</div>
<div class="t" id="k3s" style="left:696.80px;top:221.09px;font-size:7.70px;letter-spacing:0.125px;color:#111;-webkit-text-stroke:0.22px #111">Termine diesen Monat</div>
<div class="t" id="k4l" style="left:977.30px;top:184.91px;font-size:6.70px;letter-spacing:0.658px;color:#1b1b1b;font-weight:bold">AUFGABEN</div>
<div class="t" id="k4v" style="left:977.90px;top:196.87px;font-size:19.41px;letter-spacing:0.000px;color:#111;font-weight:bold">6</div>
<div class="t" id="k4s" style="left:977.30px;top:221.10px;font-size:7.74px;letter-spacing:0.138px;color:#111;-webkit-text-stroke:0.22px #111">Aufgaben diesen Monat</div>
<div class="t" id="ct" style="left:85.71px;top:286.22px;font-size:9.74px;letter-spacing:-0.011px;color:#151515;font-weight:bold">Monatliche Arbeitsleistung</div>
<div class="t" id="bd1" style="left:102.71px;top:306.71px;font-size:7.57px;letter-spacing:-0.035px;color:#222;font-weight:bold">8.7h/Tag</div>
<div class="t" id="bd2" style="left:135.91px;top:308.00px;font-size:5.80px;letter-spacing:0.237px;color:#8f8f8f;font-weight:bold">DURCHSCHNITT</div>
<div class="t" id="b1" style="left:407.00px;top:292.69px;font-size:6.85px;letter-spacing:-0.037px;color:#555">Rechnung erstellen</div>
<div class="t" id="b2" style="left:497.71px;top:292.69px;font-size:6.85px;letter-spacing:-0.038px;color:#555">Neuer Kontakt</div>
<div class="t" id="b3" style="left:572.40px;top:292.66px;font-size:6.85px;letter-spacing:-0.033px;color:#555">Projekt erstellen</div>
<div class="t" id="b4" style="left:651.40px;top:292.73px;font-size:6.75px;letter-spacing:-0.059px;color:#555">Termin erstellen</div>
<div class="t" id="b5" style="left:728.00px;top:292.71px;font-size:6.87px;letter-spacing:-0.031px;color:#555">Zeiterfassung</div>
<div class="t" id="zv" style="left:508.80px;top:355.00px;font-size:8.71px;letter-spacing:-0.063px;color:#1a1a1a;font-weight:bold">Zeitverteilung</div>
<div class="t" id="l1n" style="left:533.60px;top:382.56px;font-size:7.64px;letter-spacing:-0.012px;color:#222;-webkit-text-stroke:0.22px #222">Zeiterfassung</div>
<div class="t" id="l1v" style="left:587.00px;top:382.48px;font-size:8.08px;letter-spacing:-0.054px;color:#222;font-weight:bold">190.8h</div>
<div class="t" id="l1p" style="left:618.71px;top:383.31px;font-size:6.77px;letter-spacing:0.073px;color:#888">(77%)</div>
<div class="t" id="l2n" style="left:532.30px;top:409.18px;font-size:7.78px;letter-spacing:-0.012px;color:#222;-webkit-text-stroke:0.22px #222">Abwesenheit</div>
<div class="t" id="l2v" style="left:592.30px;top:409.21px;font-size:7.91px;letter-spacing:-0.115px;color:#222;font-weight:bold">16.0h</div>
<div class="t" id="l2p" style="left:619.00px;top:409.87px;font-size:6.67px;letter-spacing:0.041px;color:#888">(6%)</div>
<div class="t" id="l3n" style="left:532.30px;top:435.69px;font-size:7.68px;letter-spacing:-0.092px;color:#222;-webkit-text-stroke:0.22px #222">Urlaub</div>
<div class="t" id="l3v" style="left:590.30px;top:434.71px;font-size:8.41px;letter-spacing:0.059px;color:#222;font-weight:bold">40.0h</div>
<div class="t" id="l3p" style="left:619.00px;top:436.13px;font-size:6.49px;letter-spacing:-0.027px;color:#888">(16%)</div>
<div class="t" id="ma" style="left:885.50px;top:288.76px;font-size:9.31px;letter-spacing:-0.015px;color:#222;font-weight:bold">Meine Aufgaben</div>
<div class="t" id="as" style="left:896.71px;top:319.38px;font-size:7.89px;letter-spacing:-0.020px;color:#555;-webkit-text-stroke:0.22px #555">Aufgabe suchen</div>
<div class="t" id="flt" style="left:885.21px;top:349.00px;font-size:8.26px;letter-spacing:-0.225px;color:#333;font-weight:bold">Filter</div>
<div class="t" id="srt" style="left:950.10px;top:348.01px;font-size:8.52px;letter-spacing:-0.171px;color:#333;font-weight:bold">Sortierung</div>
<div class="t" id="ntf" style="left:1019.50px;top:348.98px;font-size:6.42px;letter-spacing:-0.068px;color:#888">Nach tags filtern</div>
<div class="t" id="kza" style="left:957.00px;top:389.73px;font-size:8.67px;letter-spacing:-0.081px;color:#555;font-weight:bold">Keine zugewiesenen Aufgaben.</div>
<div class="t" id="agb" style="left:934.21px;top:406.00px;font-size:8.61px;letter-spacing:-0.054px;color:#555;font-weight:bold">Aufgabe 0 bis 0 von insgesamt 0 Aufgaben</div>
<div class="t" id="p10" style="left:1052.00px;top:433.19px;font-size:8.82px;letter-spacing:0.000px;color:#bbb">10</div>
<div class="t" id="mz" style="left:883.30px;top:481.32px;font-size:9.50px;letter-spacing:-0.079px;color:#151515;font-weight:bold">Meine Zeiterfassung</div>
<div class="t" id="za0" style="left:909.40px;top:517.96px;font-size:9.10px;letter-spacing:0.040px;color:#333;-webkit-text-stroke:0.22px #333">Arbeitszeit</div>
<div class="t" id="zk0" style="left:909.40px;top:530.03px;font-size:8.80px;letter-spacing:-0.038px;color:#333;-webkit-text-stroke:0.22px #333">(Keine Kategorie)</div>
<div class="t" id="zd0" style="left:909.40px;top:541.76px;font-size:8.66px;letter-spacing:-0.039px;color:#222;-webkit-text-stroke:0.22px #222">Jan 14, 2026</div>
<div class="t" id="vo0" style="left:1127.60px;top:531.79px;font-size:6.45px;letter-spacing:-0.032px;color:#555">vor 11 Stunden</div>
<div class="t" id="za1" style="left:909.40px;top:572.96px;font-size:9.10px;letter-spacing:0.040px;color:#333;-webkit-text-stroke:0.22px #333">Arbeitszeit</div>
<div class="t" id="zk1" style="left:909.40px;top:585.03px;font-size:8.80px;letter-spacing:-0.038px;color:#333;-webkit-text-stroke:0.22px #333">(Keine Kategorie)</div>
<div class="t" id="zd1" style="left:909.40px;top:596.76px;font-size:8.66px;letter-spacing:-0.039px;color:#222;-webkit-text-stroke:0.22px #222">Jan 14, 2026</div>
<div class="t" id="vo1" style="left:1125.10px;top:586.82px;font-size:6.52px;letter-spacing:-0.012px;color:#555">vor 15 Stunden</div>
<div class="t" id="za2" style="left:909.40px;top:627.96px;font-size:9.10px;letter-spacing:0.040px;color:#333;-webkit-text-stroke:0.22px #333">Arbeitszeit</div>
<div class="t" id="zk2" style="left:909.40px;top:640.03px;font-size:8.80px;letter-spacing:-0.038px;color:#333;-webkit-text-stroke:0.22px #333">(Keine Kategorie)</div>
<div class="t" id="zd2" style="left:909.40px;top:651.76px;font-size:8.66px;letter-spacing:-0.039px;color:#222;-webkit-text-stroke:0.22px #222">Jan 13, 2026</div>
<div class="t" id="vo2" style="left:1128.60px;top:641.79px;font-size:6.64px;letter-spacing:0.022px;color:#555">vor einem Tag</div>
<div class="t" id="za3" style="left:909.40px;top:682.96px;font-size:9.10px;letter-spacing:0.040px;color:#333;-webkit-text-stroke:0.22px #333">Arbeitszeit</div>
<div class="t" id="zk3" style="left:909.40px;top:695.03px;font-size:8.80px;letter-spacing:-0.038px;color:#333;-webkit-text-stroke:0.22px #333">(Keine Kategorie)</div>
<div class="t" id="zd3" style="left:909.40px;top:706.76px;font-size:8.66px;letter-spacing:-0.039px;color:#222;-webkit-text-stroke:0.22px #222">Jan 12, 2026</div>
<div class="t" id="za4" style="left:909.40px;top:737.96px;font-size:9.10px;letter-spacing:0.040px;color:#333;-webkit-text-stroke:0.22px #333">Arbeitszeit</div>
</body></html>
